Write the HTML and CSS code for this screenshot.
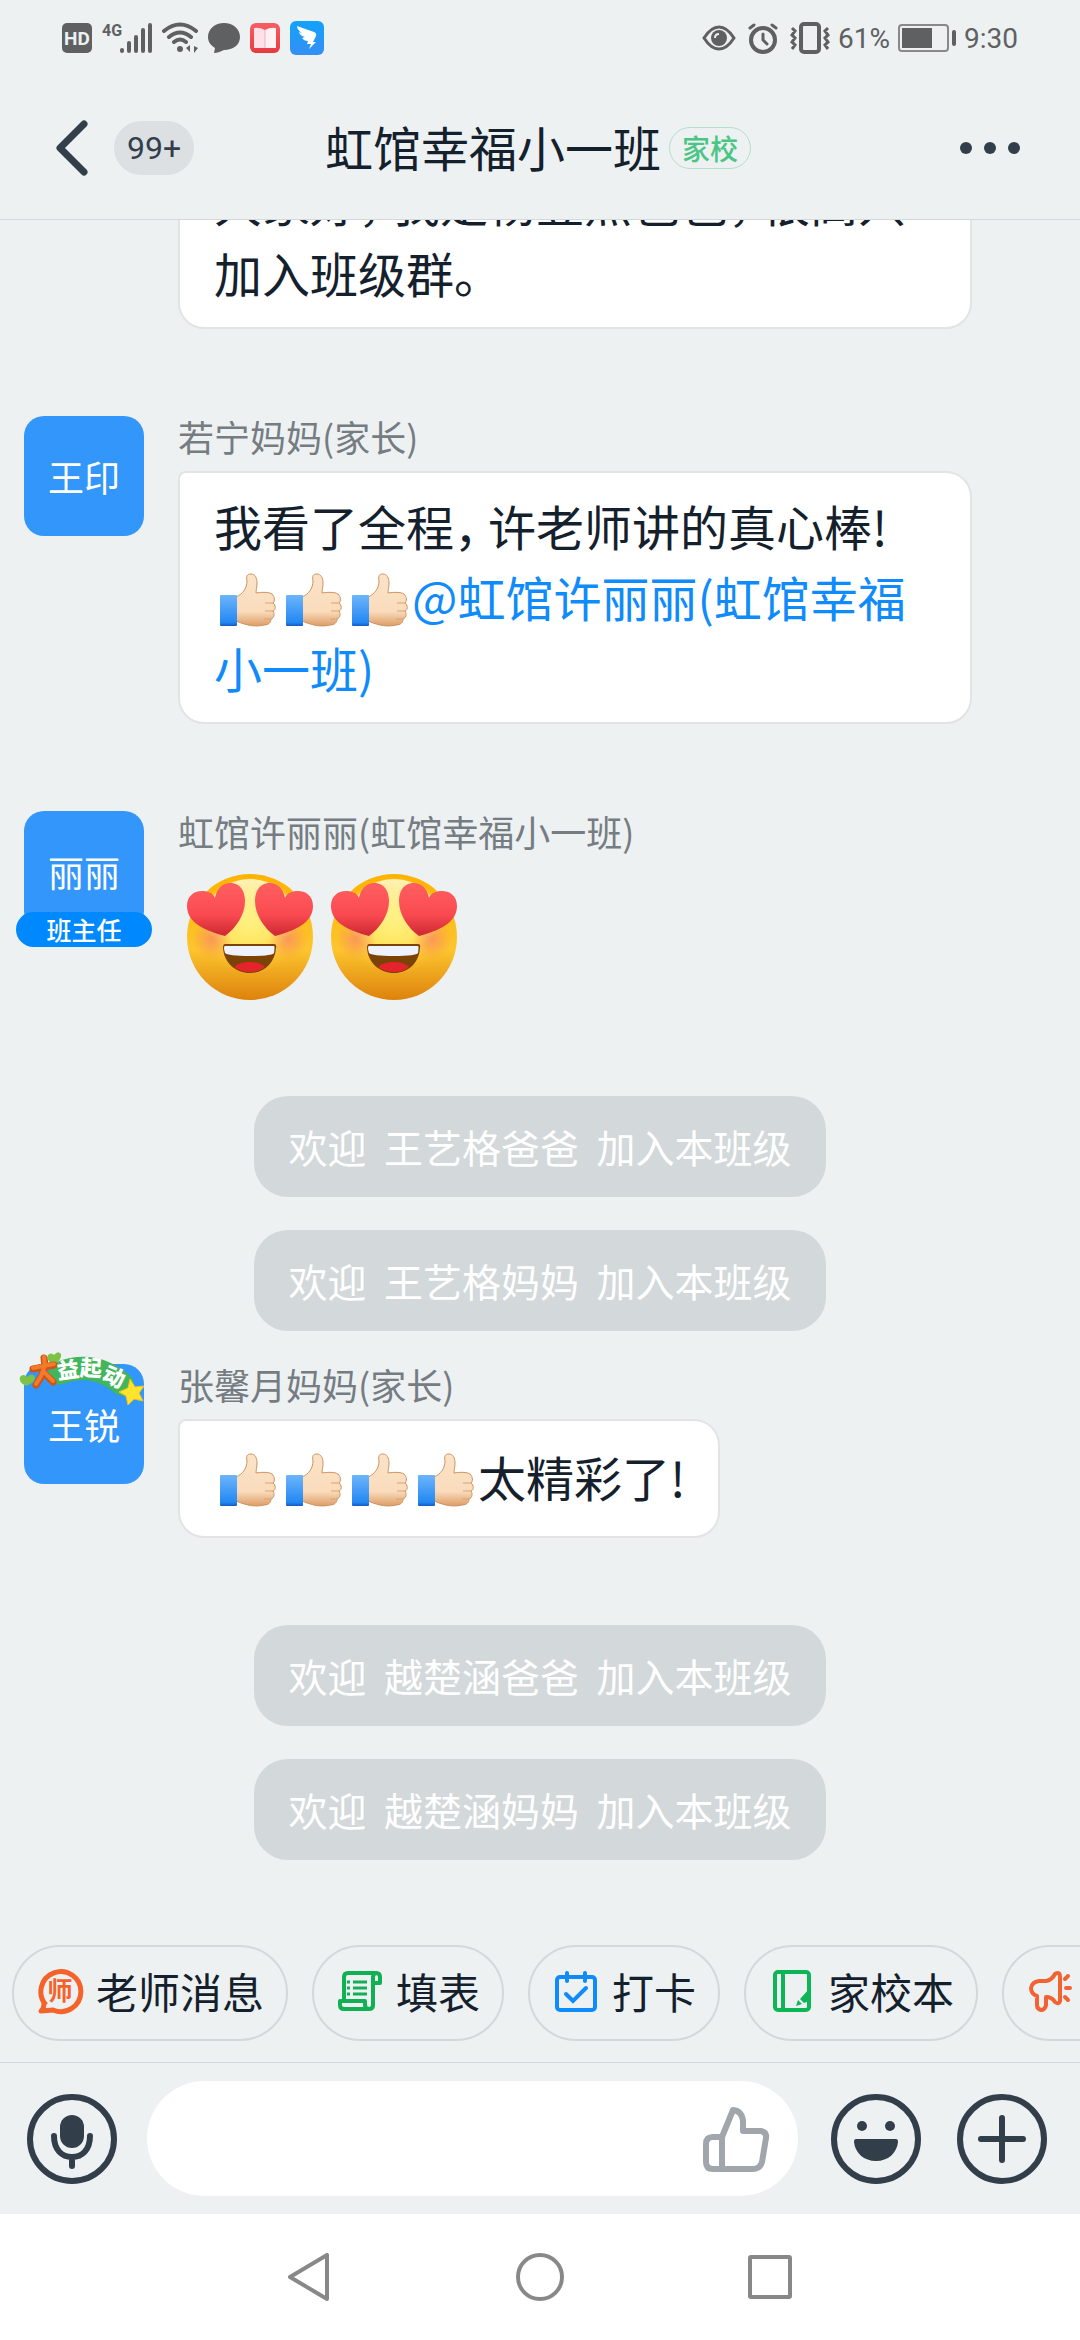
FILE: index.html
```html
<!DOCTYPE html>
<html lang="zh-CN">
<head>
<meta charset="utf-8">
<meta name="viewport" content="width=device-width, initial-scale=1">
<title>虹馆幸福小一班</title>
<link rel="stylesheet" href="styles.css">
</head>
<body>
<svg class="defs" width="0" height="0" aria-hidden="true">
  <defs>
    <linearGradient id="cuff" x1="0" y1="0" x2="0" y2="1"><stop offset="0" stop-color="#6db5fb"/><stop offset=".88" stop-color="#2488f2"/><stop offset="1" stop-color="#1458c8"/></linearGradient>
    <linearGradient id="skin" x1="0" y1="0" x2="0" y2="1"><stop offset="0" stop-color="#fbe3c8"/><stop offset=".72" stop-color="#fadcbc"/><stop offset="1" stop-color="#dd9d66"/></linearGradient>
    <linearGradient id="face" x1="0" y1="0" x2="0" y2="1"><stop offset="0" stop-color="#ffb300"/><stop offset=".6" stop-color="#fdc52e"/><stop offset="1" stop-color="#dd820c"/></linearGradient>
    <radialGradient id="glow" cx=".5" cy=".38" r=".5"><stop offset="0" stop-color="#fff27c"/><stop offset=".5" stop-color="#ffe25c"/><stop offset="1" stop-color="#fdbb2b" stop-opacity="0"/></radialGradient>
    <linearGradient id="shine" x1="0" y1="0" x2="0" y2="1"><stop offset="0" stop-color="#fff4b8"/><stop offset="1" stop-color="#ffec66" stop-opacity="0"/></linearGradient>
    <radialGradient id="blush"><stop offset="0" stop-color="#f98d60" stop-opacity=".8"/><stop offset="1" stop-color="#f98d60" stop-opacity="0"/></radialGradient>
    <linearGradient id="heart" x1="0" y1="0" x2="0" y2="1"><stop offset="0" stop-color="#ff5f60"/><stop offset=".6" stop-color="#f94a50"/><stop offset="1" stop-color="#cd2733"/></linearGradient>
    <linearGradient id="red" x1="0" y1="0" x2="0" y2="1"><stop offset="0" stop-color="#f65f63"/><stop offset="1" stop-color="#e63a40"/></linearGradient>
    <linearGradient id="blue" x1="0" y1="0" x2="0" y2="1"><stop offset="0" stop-color="#12a2fb"/><stop offset="1" stop-color="#358ff4"/></linearGradient>
    <symbol id="thumb" viewBox="0 0 66 54">
      <path d="M22 24C29 21 33 15 33 8C32 3 33 1 37 1C41 1 43 5 43 10C43 14 42 17 42 20C48 19 55 19 58 21C61 24 61 28 59 30C62 32 62 37 59 38C61 41 60 45 57 46C57 50 54 52 50 52C42 54 34 53 22 48Z" fill="url(#skin)" stroke="#cd9260" stroke-width="1"/>
      <path d="M51 30H59M51 38H59M50 46H57" stroke="#d9a273" stroke-width="1" fill="none"/>
      <rect x="6" y="22" width="17" height="31" rx="1" fill="url(#cuff)"/>
    </symbol>
    <symbol id="love" viewBox="0 0 128 128">
      <circle cx="64" cy="64" r="63" fill="url(#face)"/>
      <ellipse cx="64" cy="60" rx="56" ry="54" fill="url(#glow)"/>
      <ellipse cx="64" cy="44" rx="44" ry="38" fill="url(#shine)"/>
      <circle cx="26" cy="66" r="20" fill="url(#blush)"/><circle cx="102" cy="66" r="20" fill="url(#blush)"/>
      <path d="M39 63C20 58 1 50 1 33C1 22 9 18 16 18C22 18 27 20 29 25C31 14 38 9 46 10C55 11 59 19 59 28C59 42 50 55 39 63Z" fill="url(#heart)"/>
      <path d="M89 63C108 58 127 50 127 33C127 22 119 18 112 18C106 18 101 20 99 25C97 14 90 9 82 10C73 11 69 19 69 28C69 42 78 55 89 63Z" fill="url(#heart)"/>
      <path d="M39 71H88Q91 71 90 75C89 90 78 100 64 100S38 90 37 75Q37 71 39 71Z" fill="#7c4307"/>
      <path d="M39 73H88Q89 73 88 80Q86 83 64 83T39 80Q37 73 39 73Z" fill="#eef2fc"/>
      <path d="M48 94Q54 89 64 89T79 94Q73 99 64 99T48 94Z" fill="#e3242b"/>
    </symbol>
  </defs>
</svg>

<div class="app">
  <div class="status">
    <div class="status-left">
      <svg width="30" height="30" viewBox="0 0 30 30"><rect width="30" height="30" rx="5" fill="#5f6062"/><text x="15" y="22" text-anchor="middle" class="hd">HD</text></svg>
      <svg width="50" height="32" viewBox="0 0 50 32"><text x="0" y="14" class="net">4G</text><path d="M20 29V28M27 29V21M34 29V15M41 29V8M48 29V3" stroke="#5f6062" stroke-width="4" stroke-linecap="round"/></svg>
      <svg width="36" height="32" viewBox="0 0 36 32" fill="none" stroke="#5f6062" stroke-width="4" stroke-linecap="round"><path d="M2 9Q18-4 34 9M7 15Q18 6 29 15M12 20Q18 15 24 20"/><circle cx="18" cy="27" r="3" fill="#5f6062" stroke="none"/><path d="M28 23V30L24 26ZM32 31V24L36 26Z" fill="#5f6062" stroke="none"/></svg>
      <svg width="32" height="32" viewBox="0 0 32 32"><path d="M16 1C25 1 32 7 32 15S25 28 16 28C12 30 9 31 6 31L7 26C2 23 0 19 0 15C0 7 7 1 16 1Z" fill="#5f6062"/></svg>
      <svg width="30" height="30" viewBox="0 0 30 30"><rect width="30" height="30" rx="6" fill="url(#red)"/><path d="M4 5Q10 4 15 7V25H4Z" fill="#fde0e8"/><path d="M26 5Q20 4 15 7V25H26Z" fill="#fff0f3"/><path d="M15 7V25" stroke="#f3b1bd"/></svg>
      <svg width="34" height="34" viewBox="0 0 34 34"><rect width="34" height="34" rx="6" fill="url(#blue)"/><path d="M7 5L24 11Q27 12 26 15L23 21H26L19 28L21 23H17L18 20Q14 20 12 17L15 16Q10 15 9 11L12 12Q7 9 7 5Z" fill="#fff"/></svg>
    </div>
    <div class="status-right">
      <div class="status-icons">
        <svg width="34" height="28" viewBox="0 0 34 28"><path d="M2 14Q9 3 17 3T32 14Q25 25 17 25T2 14Z" fill="none" stroke="#5f6062" stroke-width="3"/><circle cx="17" cy="14" r="8" fill="#5f6062"/><path d="M13 14Q13 10 17 10" stroke="#edf1f2" stroke-width="2" fill="none"/></svg>
        <svg width="30" height="32" viewBox="0 0 30 32" fill="none" stroke="#5f6062" stroke-linecap="round" stroke-width="4"><circle cx="15" cy="18" r="12"/><path d="M15 12V18L19 22M2 6L6 3M24 3L28 6" stroke-width="3"/></svg>
        <svg width="40" height="32" viewBox="0 0 40 32" fill="none" stroke="#5f6062"><rect x="11" y="2" width="18" height="28" rx="3" stroke-width="4"/><path d="M2 6L5 9L2 13L5 16L2 20L5 23L2 27M38 6L35 9L38 13L35 16L38 20L35 23L38 27" stroke-width="3"/></svg>
      </div>
      <span>61%</span>
      <svg width="58" height="28" viewBox="0 0 58 28"><rect x="1" y="1" width="49" height="26" rx="3" fill="none" stroke="#88898b" stroke-width="2"/><rect x="4" y="4" width="30" height="20" fill="#5f6062"/><rect x="54" y="6" width="4" height="16" rx="2" fill="#5f6062"/></svg>
      <span>9:30</span>
    </div>
  </div>

  <header class="header">
    <div class="header-start">
      <button class="plain" aria-label="返回"><svg width="32" height="56" viewBox="0 0 32 56"><path d="M28 4L4 28L28 52" fill="none" stroke="#323f4b" stroke-width="7" stroke-linecap="round" stroke-linejoin="round"/></svg></button>
      <span class="unread">99+</span>
    </div>
    <div class="header-title"><h1>虹馆幸福小一班</h1><span class="tag">家校</span></div>
    <button class="plain more" aria-label="更多"><svg width="60" height="12" viewBox="0 0 60 12" fill="#323f4b"><circle cx="6" cy="6" r="6"/><circle cx="30" cy="6" r="6"/><circle cx="54" cy="6" r="6"/></svg></button>
  </header>

  <main class="chat">
    <article class="message continued">
      <p class="bubble">大家好<span class="comma">，</span>我是杨壹点爸爸<span class="comma">，</span>很高兴加入班级群。</p>
    </article>

    <article class="message">
      <div class="avatar">王印</div>
      <div class="body">
        <div class="name">若宁妈妈(家长)</div>
        <p class="bubble">我看了全程<span class="comma">，</span>许老师讲的真心棒!<br><svg class="thumb"><use href="#thumb"/></svg><svg class="thumb"><use href="#thumb"/></svg><svg class="thumb"><use href="#thumb"/></svg><a href="#" class="mention">@虹馆许丽丽(虹馆幸福小一班)</a></p>
      </div>
    </article>

    <article class="message">
      <div class="avatar">丽丽<span class="role">班主任</span></div>
      <div class="body">
        <div class="name">虹馆许丽丽(虹馆幸福小一班)</div>
        <div class="faces"><svg><use href="#love"/></svg><svg><use href="#love"/></svg></div>
      </div>
    </article>

    <div class="notices">
      <p class="notice">欢迎&nbsp; 王艺格爸爸&nbsp; 加入本班级</p>
      <p class="notice">欢迎&nbsp; 王艺格妈妈&nbsp; 加入本班级</p>
    </div>

    <article class="message after-notice">
      <div class="avatar">王锐
        <svg class="sticker" width="130" height="56" viewBox="0 0 130 56">
          <path d="M44 23Q78 10 106 34" fill="none" stroke="#41b65c" stroke-width="23" stroke-linecap="round"/>
          <path d="M10 36Q2 32 4 27Q7 23 11 27Q16 22 19 27Q20 32 10 36Z" fill="#7cc246"/>
          <path d="M38 16Q29 9 32 5Q35 2 38 5Q42 0 45 4Q46 9 38 16Z" fill="#7cc246"/>
          <path d="M17 19L38 15M28 8Q31 20 20 35M28 23L37 32" fill="none" stroke="#cf5410" stroke-width="7" stroke-linecap="round"/>
          <path d="M17 18L38 14M28 7Q31 19 20 34M28 22L37 31" fill="none" stroke="#f37a2a" stroke-width="4" stroke-linecap="round"/>
          <g class="sticker-text"><text transform="translate(52 20) rotate(-8)" y="8">益</text><text transform="translate(75 18) rotate(4)" y="8">起</text><text transform="translate(98 27) rotate(24)" y="8">动</text></g>
          <path d="M114 29L119 37L128 36L123 43L127 51L118 49L112 55L110 46L103 42L112 38Z" fill="#ffe32d" stroke="#efc51a"/>
        </svg>
      </div>
      <div class="body">
        <div class="name">张馨月妈妈(家长)</div>
        <p class="bubble single"><svg class="thumb"><use href="#thumb"/></svg><svg class="thumb"><use href="#thumb"/></svg><svg class="thumb"><use href="#thumb"/></svg><svg class="thumb"><use href="#thumb"/></svg>太精彩了!</p>
      </div>
    </article>

    <div class="notices">
      <p class="notice">欢迎&nbsp; 越楚涵爸爸&nbsp; 加入本班级</p>
      <p class="notice">欢迎&nbsp; 越楚涵妈妈&nbsp; 加入本班级</p>
    </div>
  </main>

  <nav class="chips">
    <button class="chip"><svg width="48" height="48" viewBox="0 0 48 48"><path d="M10 38A20 20 0 1 1 17 43L5 44Q8 42 8 35" fill="none" stroke="#f5622a" stroke-width="5" stroke-linejoin="round"/><text x="24" y="33" text-anchor="middle" class="teacher">师</text></svg>老师消息</button>
    <button class="chip"><svg width="48" height="48" viewBox="0 0 48 48" fill="none" stroke="#12b055" stroke-width="4"><path d="M8 34V10Q8 6 12 6H40Q44 6 44 10V16H37V38Q37 42 33 42H8Q4 42 4 38V34H29V38Q29 42 33 42M37 16V10Q37 6 41 6" stroke-linejoin="round"/><path d="M17 15H31M17 21H31M17 27H31" stroke-width="3"/><path d="M11 15H14M11 21H14M11 27H14" stroke-width="3"/></svg>填表</button>
    <button class="chip"><svg width="48" height="48" viewBox="0 0 48 48" fill="none" stroke="#0f8bfb" stroke-width="4" stroke-linecap="round"><rect x="5" y="10" width="38" height="33" rx="3"/><path d="M15 6V14M33 6V14M14 27L21 34L34 21"/></svg>打卡</button>
    <button class="chip"><svg width="48" height="48" viewBox="0 0 48 48" fill="none" stroke="#0db557" stroke-width="4"><rect x="7" y="5" width="34" height="38" rx="3"/><path d="M15 5V43"/><path d="M41 22V34L36 36L32 32Z" fill="#0db557" stroke="none"/><path d="M30 33L34 37L28 39Z" fill="#0db557" stroke="none"/></svg>家校本</button>
    <button class="chip"><svg width="48" height="48" viewBox="0 0 48 48" fill="none" stroke="#f26333" stroke-width="4" stroke-linecap="round" stroke-linejoin="round"><path d="M13 14H20Q26 13 29 7Q34 4 34 10V34Q33 38 29 35Q26 30 20 30V38Q19 43 15 43Q11 42 11 38V29Q5 27 5 21Q6 15 13 14Z"/><path d="M39 12L42 9M40 21H44M39 30L42 33"/></svg>通知</button>
  </nav>

  <form class="composer">
    <button type="button" class="plain" aria-label="语音"><svg width="90" height="90" viewBox="0 0 90 90" fill="none" stroke="#323f4b" stroke-width="6" stroke-linecap="round"><circle cx="45" cy="45" r="42"/><rect x="33" y="21" width="24" height="33" rx="12" fill="#323f4b" stroke="none"/><path d="M27 42C27 56 35 63 45 63S63 56 63 42M45 63V72"/></svg></button>
    <div class="field">
      <input type="text" aria-label="消息">
      <button type="button" class="plain" aria-label="点赞"><svg width="68" height="68" viewBox="0 0 68 68" fill="none" stroke="#a1a6ac" stroke-width="6" stroke-linejoin="round"><path d="M20 64H11Q4 64 4 57V39Q4 32 11 32H20ZM20 32L31 5Q40 6 41 16V26H59Q65 27 64 33L60 57Q58 64 51 64H20"/></svg></button>
    </div>
    <div class="actions">
      <button type="button" class="plain" aria-label="表情"><svg width="90" height="90" viewBox="0 0 90 90"><circle cx="45" cy="45" r="42" fill="none" stroke="#323f4b" stroke-width="6"/><g fill="#323f4b"><circle cx="31" cy="32" r="5"/><circle cx="59" cy="32" r="5"/><path d="M25 45H65Q67 45 67 48C66 59 57 67 45 67S24 59 23 48Q23 45 25 45Z"/></g></svg></button>
      <button type="button" class="plain" aria-label="更多功能"><svg width="90" height="90" viewBox="0 0 90 90" fill="none" stroke="#323f4b" stroke-width="6" stroke-linecap="round"><circle cx="45" cy="45" r="42"/><path d="M45 24V66M24 45H66"/></svg></button>
    </div>
  </form>

  <footer class="system">
    <button class="plain" aria-label="后退"><svg width="48" height="48" viewBox="0 0 48 48"><path d="M41 2V46L4 24Z" fill="none" stroke="#888" stroke-width="4" stroke-linejoin="round"/></svg></button>
    <button class="plain" aria-label="主页"><svg width="48" height="48" viewBox="0 0 48 48"><circle cx="24" cy="24" r="22" fill="none" stroke="#888" stroke-width="4"/></svg></button>
    <button class="plain" aria-label="最近任务"><svg width="48" height="48" viewBox="0 0 48 48"><rect x="4" y="4" width="40" height="40" rx="1" fill="none" stroke="#888" stroke-width="4"/></svg></button>
  </footer>
</div>
</body>
</html>
```
FILE: styles.css
```css
* {
  box-sizing: border-box;
}

body {
  margin: 0;
  background: #edf1f2;
  color: #14212d;
  font-family: "Noto Sans CJK SC", sans-serif;
}

h1,
p {
  margin: 0;
  font-weight: 400;
}

svg {
  display: block;
  flex: none;
}

.defs {
  position: absolute;
}

.plain {
  flex: none;
  padding: 0;
  border: 0;
  background: none;
  cursor: pointer;
}

.app {
  display: flex;
  flex-direction: column;
  height: 100vh;
}

/* Status bar */
.status {
  flex: none;
  display: flex;
  justify-content: space-between;
  align-items: center;
  height: 76px;
  padding: 0 62px;
  color: #5f6062;
  font: 28px Roboto, sans-serif;
}

.status-left,
.status-right,
.status-icons {
  display: flex;
  align-items: center;
  gap: 10px;
}

.status-right {
  gap: 8px;
}

.status-icons {
  gap: 12px;
}

.hd {
  font: bold 19px Roboto, sans-serif;
  fill: #edf1f2;
}

.net {
  font: bold 16px Roboto, sans-serif;
  fill: #5f6062;
}

/* Title bar */
.header {
  flex: none;
  display: grid;
  grid-template-columns: 1fr auto 1fr;
  align-items: center;
  height: 144px;
  padding: 0 60px 0 56px;
  border-bottom: 1px solid #d3d8da;
}

.header-start {
  display: flex;
  align-items: center;
  gap: 26px;
}

.unread {
  padding: 0 13px;
  border-radius: 27px;
  background: #dce0e3;
  color: #323f4b;
  font: 32px/54px Roboto, sans-serif;
}

.header-title {
  display: flex;
  align-items: center;
  gap: 8px;
}

.header-title h1 {
  padding-bottom: 4px;
  font-size: 48px;
  line-height: 72px;
}

.tag {
  padding: 0 12px;
  border: 1px solid #b5dfc6;
  border-radius: 21px;
  color: #4bc585;
  font-size: 28px;
  font-weight: 500;
  line-height: 40px;
}

.more {
  justify-self: end;
}

/* Conversation, anchored to its newest entry */
.chat {
  flex: 1;
  min-height: 0;
  display: flex;
  flex-direction: column;
  justify-content: flex-end;
  padding-bottom: 85px;
  overflow: hidden;
}

.message {
  flex: none;
  display: flex;
  gap: 34px;
  margin-top: 87px;
  padding: 0 108px 0 24px;
}

.continued {
  margin-top: 0;
  padding-left: 178px;
}

.after-notice {
  margin-top: 33px;
}

.avatar {
  position: relative;
  flex: none;
  width: 120px;
  height: 120px;
  border-radius: 20px;
  background: #3296fa;
  color: #fff;
  font-size: 36px;
  line-height: 120px;
  text-align: center;
}

.role {
  position: absolute;
  bottom: -16px;
  left: -8px;
  width: 136px;
  border-radius: 18px;
  background: #0089ff;
  font-size: 25px;
  font-weight: 500;
  line-height: 35px;
}

.sticker {
  position: absolute;
  top: -14px;
  left: -8px;
}

.sticker-text {
  font-size: 22px;
  font-weight: 900;
  line-height: 22px;
  text-anchor: middle;
  fill: #fff;
}

.body {
  min-width: 0;
}

.name {
  margin-bottom: 15px;
  color: #757c82;
  font-size: 36px;
  line-height: 40px;
}

.bubble {
  width: fit-content;
  padding: 17px 32px 19px 34px;
  border: 2px solid #e2e4e4;
  border-radius: 8px 26px 26px 26px;
  background: #fff;
  font-size: 48px;
  line-height: 71px;
}

.single {
  padding-top: 20px;
  padding-bottom: 24px;
}

.comma {
  margin-right: 10px;
  font-feature-settings: "halt";
}

.thumb {
  display: inline-block;
  width: 66px;
  height: 54px;
  vertical-align: -10px;
}

.mention {
  color: #0f8bfb;
  text-decoration: none;
}

.faces {
  display: flex;
  gap: 16px;
  padding: 7px 0 8px 8px;
}

.faces svg {
  width: 128px;
  height: 128px;
}

.notices {
  flex: none;
  display: flex;
  flex-direction: column;
  align-items: center;
  gap: 33px;
  margin-top: 87px;
}

.notice {
  padding: 0 35px;
  border-radius: 34px;
  background: #d3d8da;
  color: #fff;
  font-size: 39px;
  line-height: 101px;
}

/* Shortcuts */
.chips {
  flex: none;
  display: flex;
  gap: 24px;
  padding: 0 12px 21px;
  overflow: hidden;
  border-bottom: 1px solid #d3d8da;
}

.chip {
  flex: none;
  display: flex;
  align-items: center;
  gap: 12px;
  height: 96px;
  padding: 0 22px 4px;
  border: 2px solid #d3d8da;
  border-radius: 48px;
  background: none;
  color: inherit;
  font: 42px/60px "Noto Sans CJK SC", sans-serif;
  cursor: pointer;
}

.teacher {
  font: bold 25px "Noto Sans CJK SC", sans-serif;
  fill: #f5622a;
  stroke: none;
}

/* Message composer */
.composer {
  flex: none;
  display: flex;
  align-items: center;
  gap: 30px;
  padding: 18px 33px 18px 27px;
}

.field {
  flex: 1;
  min-width: 0;
  display: flex;
  align-items: center;
  height: 115px;
  padding: 0 28px 0 40px;
  border-radius: 58px;
  background: #fff;
}

.field input {
  flex: 1;
  min-width: 0;
  border: 0;
  outline: 0;
  background: none;
  font: 48px "Noto Sans CJK SC", sans-serif;
}

.actions {
  display: flex;
  gap: 36px;
  padding-left: 3px;
}

/* System navigation */
.system {
  flex: none;
  display: flex;
  justify-content: center;
  gap: 182px;
  padding: 39px 0;
  background: #fff;
}
```
